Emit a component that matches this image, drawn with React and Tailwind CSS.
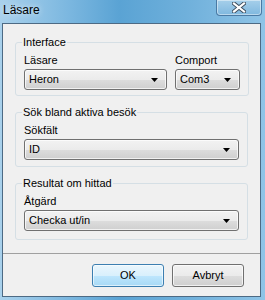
import React from "react";

const font = { fontFamily: '"Liberation Sans", Arial, sans-serif' };

function Combo({ value, className = "" }) {
  return (
    <div
      className={`h-[21px] rounded-[3px] border border-[#707070] bg-[linear-gradient(#f2f2f2_0%,#ebebeb_50%,#dddddd_51%,#cfcfcf_100%)] shadow-[inset_0_0_0_1px_rgba(255,255,255,0.7)] flex items-center justify-between pl-[4px] pr-[8px] ${className}`}
    >
      <span className="text-[11px] leading-[13px] text-black">{value}</span>
      <svg width="7" height="4" viewBox="0 0 7 4">
        <polygon points="0,0 7,0 3.5,4" fill="#000" />
      </svg>
    </div>
  );
}

function Group({ title, children, className }) {
  return (
    <fieldset
      className={`border border-[#d5dfe5] rounded-[3px] px-[8px] pt-[4px] ${className}`}
    >
      <legend className="ml-[-2px] px-[1px] text-[11px] leading-[13px] text-black">
        {title}
      </legend>
      {children}
    </fieldset>
  );
}

export default function App() {
  return (
    <div
      className="w-[265px] h-[300px] flex flex-col bg-[linear-gradient(90deg,#a9d1ec_0%,#7db8e0_25%,#5aa3d4_45%,#6fb0db_70%,#8fc4e7_100%)] overflow-hidden"
      style={font}
    >
      <div className="h-[23px] shrink-0 flex items-start justify-between">
        <span className="mt-[3px] ml-[3px] text-[12px] leading-[15px] text-black [text-shadow:0_0_6px_rgba(255,255,255,0.8)]">
          Läsare
        </span>
        <div className="mr-[3px] w-[46px] h-[16px] rounded-b-[4px] border border-t-0 border-[#4a7aa4] bg-[linear-gradient(#a6cfea,#7fb8df)] shadow-[inset_0_0_0_1px_rgba(255,255,255,0.45)] flex items-center justify-center">
          <svg width="14" height="11" viewBox="0 0 14 11">
            <path d="M2 1.5 L12 9.5 M12 1.5 L2 9.5" stroke="#3b4a5a" strokeWidth="4" strokeLinecap="square" />
            <path d="M2 1.5 L12 9.5 M12 1.5 L2 9.5" stroke="#ffffff" strokeWidth="2.2" strokeLinecap="square" />
          </svg>
        </div>
      </div>
      <div className="ml-[2px] mr-[4px] mb-[3px] flex-1 border border-[#4d6a84] bg-[#f0f0f0] flex flex-col">
        <div className="flex flex-col gap-[10px] px-[12px] pt-[12px]">
          <Group title="Interface" className="pb-[5px]">
            <div className="flex gap-[8px]">
              <div className="w-[143px] flex flex-col gap-[2px]">
                <span className="text-[11px] leading-[13px] pt-[1px]">Läsare</span>
                <Combo value="Heron" />
              </div>
              <div className="w-[65px] flex flex-col gap-[2px]">
                <span className="text-[11px] leading-[13px] pt-[1px]">Comport</span>
                <Combo value="Com3" />
              </div>
            </div>
          </Group>
          <Group title="Sök bland aktiva besök" className="pb-[6px]">
            <div className="flex flex-col gap-[2px]">
              <span className="text-[11px] leading-[13px] pt-[1px]">Sökfält</span>
              <Combo value="ID" />
            </div>
          </Group>
          <Group title="Resultat om hittad" className="pb-[8px]">
            <div className="flex flex-col gap-[2px]">
              <span className="text-[11px] leading-[13px] pt-[1px]">Åtgärd</span>
              <Combo value="Checka ut/in" />
            </div>
          </Group>
        </div>
        <div className="mt-[13px] h-px bg-[#a0a0a0]" />
        <div className="flex justify-end gap-[8px] pr-[16px] pt-[10px]">
          <button className="w-[72px] h-[23px] rounded-[3px] border border-[#3c7fb1] bg-[linear-gradient(#eaf6fd_0%,#d9f0fc_50%,#bee6fd_51%,#a7d9f5_100%)] shadow-[inset_0_0_0_1px_rgba(255,255,255,0.6)] text-[11px] text-black">
            OK
          </button>
          <button className="w-[72px] h-[23px] rounded-[3px] border border-[#707070] bg-[linear-gradient(#f2f2f2_0%,#ebebeb_50%,#dddddd_51%,#cfcfcf_100%)] shadow-[inset_0_0_0_1px_rgba(255,255,255,0.7)] text-[11px] text-black">
            Avbryt
          </button>
        </div>
      </div>
    </div>
  );
}
